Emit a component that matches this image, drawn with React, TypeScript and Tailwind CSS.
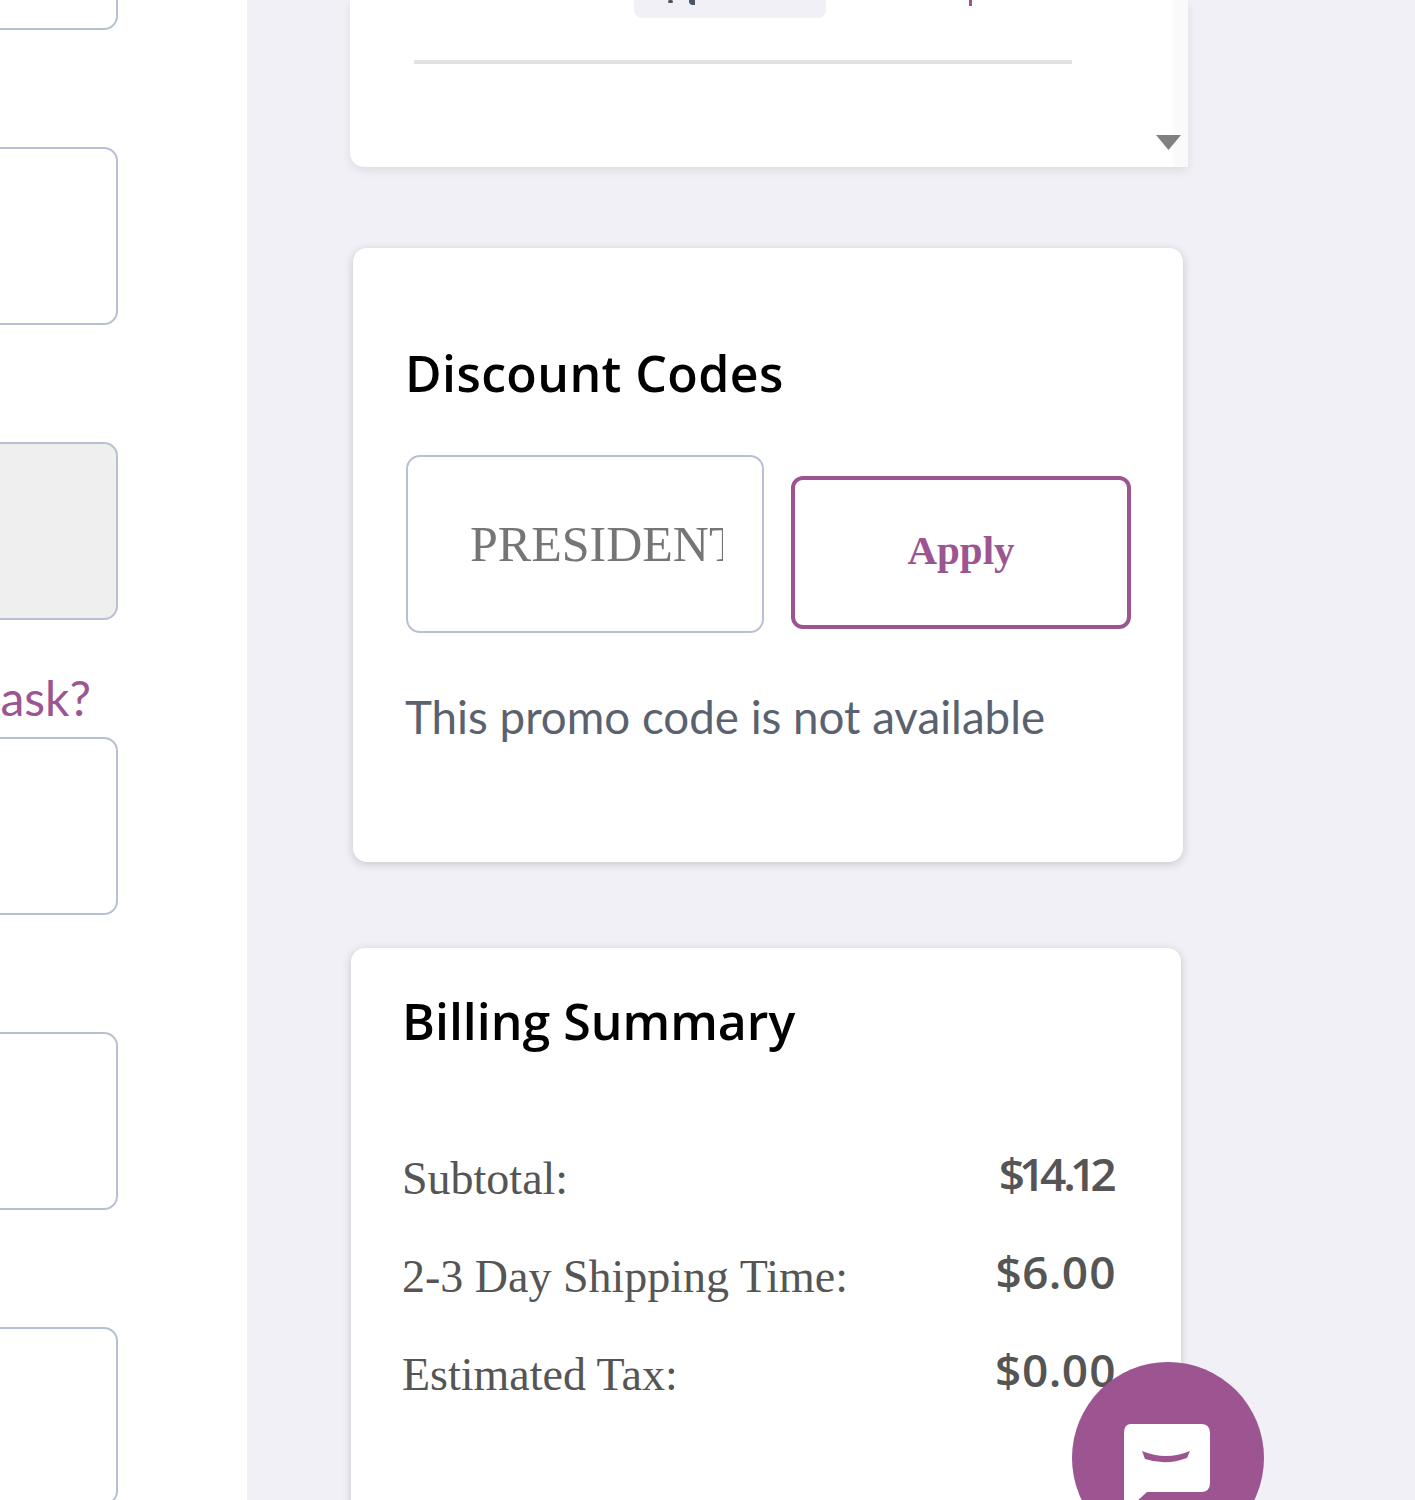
export default function App() {
  const inputs = ["bg-white", "bg-white", "bg-[#efefef]", "bg-white", "bg-white", "bg-white"];
  return (
    <div className="h-[1500px] overflow-hidden bg-[#f0f0f6] flex relative" style={{ fontFamily: '"Liberation Serif", serif' }}>
      <div className="w-[247px] shrink-0 bg-white h-full flex flex-col overflow-hidden">
        <div className="-mt-[148px] -ml-[20px] w-[138px] flex flex-col">
          {inputs.map((c, i) => (
            <div key={i}>
              {i > 0 && (
                <div className="h-[117px] flex items-end justify-end">
                  {i === 3 && <span className="text-[#9c5590] text-[48px] leading-[70px] mb-[4px] font-['Lato',sans-serif] pr-[27px] whitespace-nowrap">ask?</span>}
                </div>
              )}
              <div className={`h-[178px] rounded-[14px] border-2 border-[#b9c0d3] ${c}`} />
            </div>
          ))}
        </div>
      </div>
      <div className="flex flex-col ml-[103px]">
        <div className="relative w-[838px] h-[167px] bg-white rounded-bl-[14px] shadow-[0_4px_10px_rgba(0,0,0,0.08)] shrink-0">
          <div className="absolute right-0 top-0 bottom-0 w-[15px] bg-[#fafafa]" />
          <div className="absolute left-[284px] top-0 w-[192px] h-[18px] bg-[#f0f0f6] rounded-b-[8px]" />
          <div className="absolute left-[318px] top-0 w-[5px] h-[3px] bg-[#4a5568] rounded-full" />
          <div className="absolute left-[339px] top-0 w-[6px] h-[5px] bg-[#4a5568] rounded-bl-[4px]" />
          <div className="absolute left-[619px] top-0 w-[3px] h-[6px] bg-[#9c5590]" />
          <div className="absolute left-[64px] top-[60px] w-[658px] h-[4px] bg-[#e2e2e2]" />
          <svg className="absolute right-[7px] top-[135px]" width="25" height="15" viewBox="0 0 25 15"><path d="M0 0H25L12.5 15Z" fill="#808080" /></svg>
        </div>
        <div className="ml-[3px] mt-[81px] w-[830px] h-[614px] bg-white rounded-[14px] shadow-[0_2px_10px_rgba(0,0,0,0.18)] shrink-0 pl-[53px] pt-[92px]">
          <h2 className="text-[50px] leading-[66px] font-semibold text-black tracking-[0.4px] -ml-[1px] font-['Open_Sans',sans-serif]">Discount Codes</h2>
          <div className="flex items-start mt-[49px] gap-[27px]">
            <input
              readOnly
              value="PRESIDENTS"
              className="w-[358px] h-[178px] rounded-[14px] border-2 border-[#b9c0d3] pl-[62px] pr-[39px] text-[50px] text-[#757575] outline-none"
            />
            <button className="mt-[21px] w-[340px] h-[153px] pb-[3px] rounded-[12px] border-[4px] border-[#9c5590] text-[#9c5590] font-bold text-[41px]">Apply</button>
          </div>
          <p className="mt-[49px] -ml-[1px] text-[45.7px] leading-[70px] text-[#5a6270] font-['Lato',sans-serif] whitespace-nowrap">This promo code is not available</p>
        </div>
        <div className="ml-[1px] mt-[86px] w-[830px] h-[700px] bg-white rounded-[14px] shadow-[0_2px_10px_rgba(0,0,0,0.18)] shrink-0 pl-[51px] pr-[65px] pt-[40px]">
          <h2 className="text-[50px] leading-[66px] font-semibold text-black font-['Open_Sans',sans-serif]">Billing Summary</h2>
          <div className="mt-[94px] flex flex-col gap-[38px] text-[#555]">
            <div className="flex justify-between items-center h-[60px]">
              <span className="text-[46px]">Subtotal:</span>
              <span className="-mt-[10px] text-[46px] font-semibold proportional-nums tracking-[-3.4px] pr-[3px] font-['Open_Sans',sans-serif]">$14.12</span>
            </div>
            <div className="flex justify-between items-center h-[60px]">
              <span className="text-[46px]">2-3 Day Shipping Time:</span>
              <span className="-mt-[10px] text-[46px] font-semibold proportional-nums font-['Open_Sans',sans-serif]">$6.00</span>
            </div>
            <div className="flex justify-between items-center h-[60px]">
              <span className="text-[46px]">Estimated Tax:</span>
              <span className="-mt-[10px] text-[46px] font-semibold proportional-nums font-['Open_Sans',sans-serif]">$0.00</span>
            </div>
          </div>
        </div>
      </div>
      <div className="absolute left-[1072px] top-[1362px] w-[192px] h-[192px] rounded-full bg-[#9c5590] flex items-start justify-center pt-[61px]">
        <svg className="-ml-[3px]" width="88" height="90" viewBox="0 0 88 90">
          <path d="M8 1H78Q87 1 87 10V60Q87 69 78 69H24L1 90V10Q1 1 8 1Z" fill="#fff" />
          <path d="M19 28Q43 38 67 28L64 35Q43 43 22 36Z" fill="#9c5590" />
        </svg>
      </div>
    </div>
  );
}
